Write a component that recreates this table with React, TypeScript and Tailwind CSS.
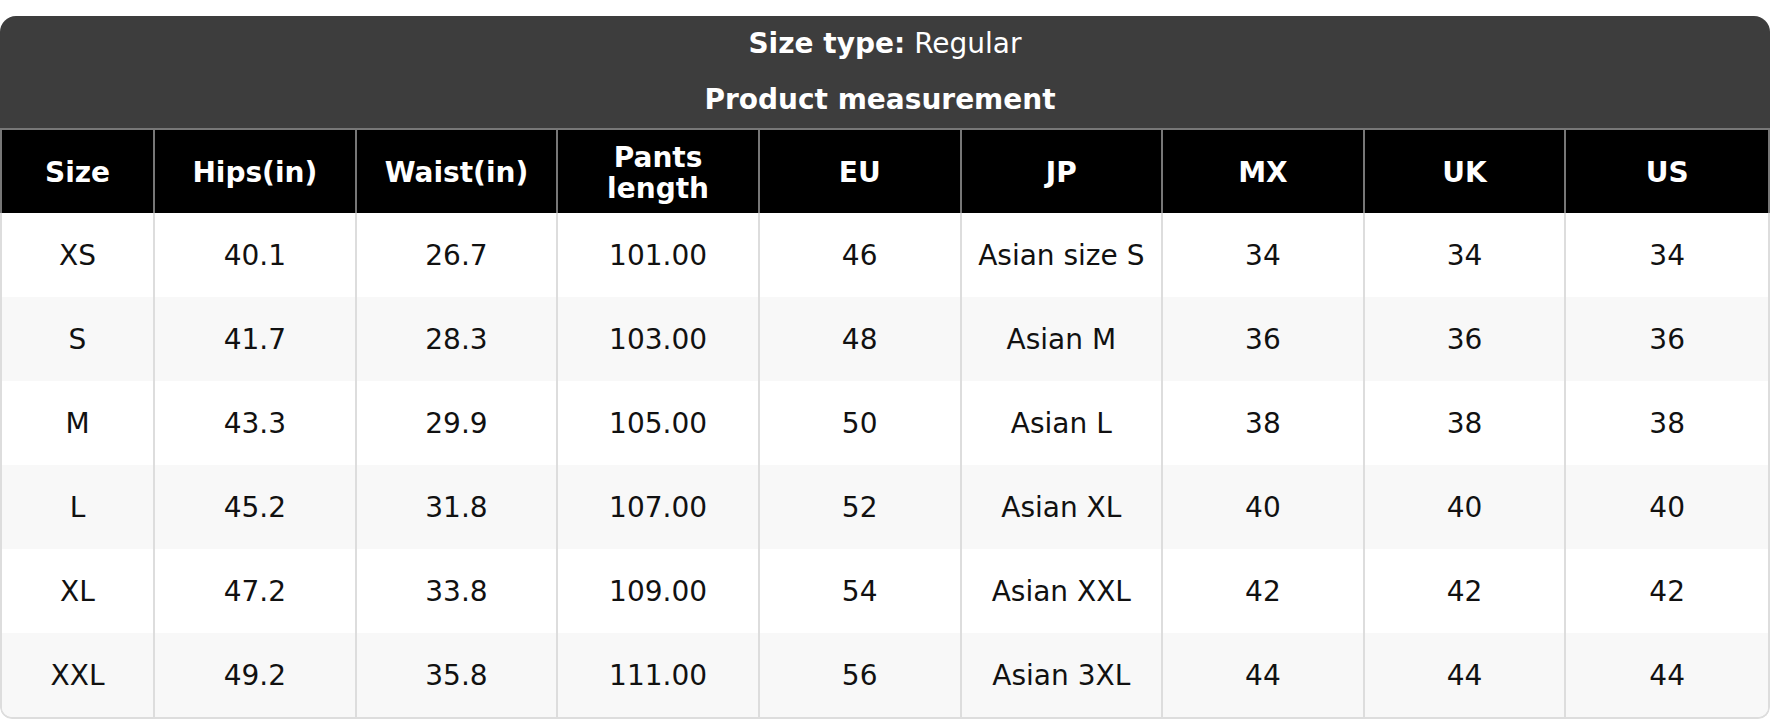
const columns = ["Size", "Hips(in)", "Waist(in)", "Pants length", "EU", "JP", "MX", "UK", "US"];

const rows = [
  ["XS", "40.1", "26.7", "101.00", "46", "Asian size S", "34", "34", "34"],
  ["S", "41.7", "28.3", "103.00", "48", "Asian M", "36", "36", "36"],
  ["M", "43.3", "29.9", "105.00", "50", "Asian L", "38", "38", "38"],
  ["L", "45.2", "31.8", "107.00", "52", "Asian XL", "40", "40", "40"],
  ["XL", "47.2", "33.8", "109.00", "54", "Asian XXL", "42", "42", "42"],
  ["XXL", "49.2", "35.8", "111.00", "56", "Asian 3XL", "44", "44", "44"],
];

export default function App() {
  return (
    <div className="w-full bg-white pt-[16px] font-['DejaVu_Sans',sans-serif] text-[28px]">
      <div className="overflow-hidden rounded-t-[16px] rounded-b-[12px]">
        <div className="flex flex-col bg-[#3d3d3d] text-white">
          <div className="flex h-[56px] items-center justify-center">
            <span className="font-bold">Size type:</span>
            <span className="ml-[9px]">Regular</span>
          </div>
          <div className="flex h-[56px] items-center justify-center pr-[10px] font-bold">
            Product measurement
          </div>
        </div>

        <div className="grid h-[85px] grid-cols-[153px_repeat(8,minmax(0,1fr))] border-x-2 border-t-2 border-[#777] bg-black text-white">
          {columns.map((col, i) => (
            <div
              key={col}
              className={`flex items-center justify-center px-2 pt-[2px] text-center font-bold leading-[31px] ${i < columns.length - 1 ? "border-r-2 border-[#777]" : ""}`}
            >
              {col === "Pants length" ? (
                <span>
                  Pants
                  <br />
                  length
                </span>
              ) : (
                col
              )}
            </div>
          ))}
        </div>

        <div className="overflow-hidden rounded-b-[12px] border-x-2 border-b-2 border-[#ddd]">
          {rows.map((row, r) => (
            <div
              key={row[0]}
              className={`grid h-[84px] grid-cols-[153px_repeat(8,minmax(0,1fr))] text-[#111] ${r % 2 === 1 ? "bg-[#f8f8f8]" : "bg-white"}`}
            >
              {row.map((cell, i) => (
                <div
                  key={i}
                  className={`flex items-center justify-center pt-[2px] text-center ${i < row.length - 1 ? "border-r-2 border-[#ddd]" : ""}`}
                >
                  {cell}
                </div>
              ))}
            </div>
          ))}
        </div>
      </div>
    </div>
  );
}
